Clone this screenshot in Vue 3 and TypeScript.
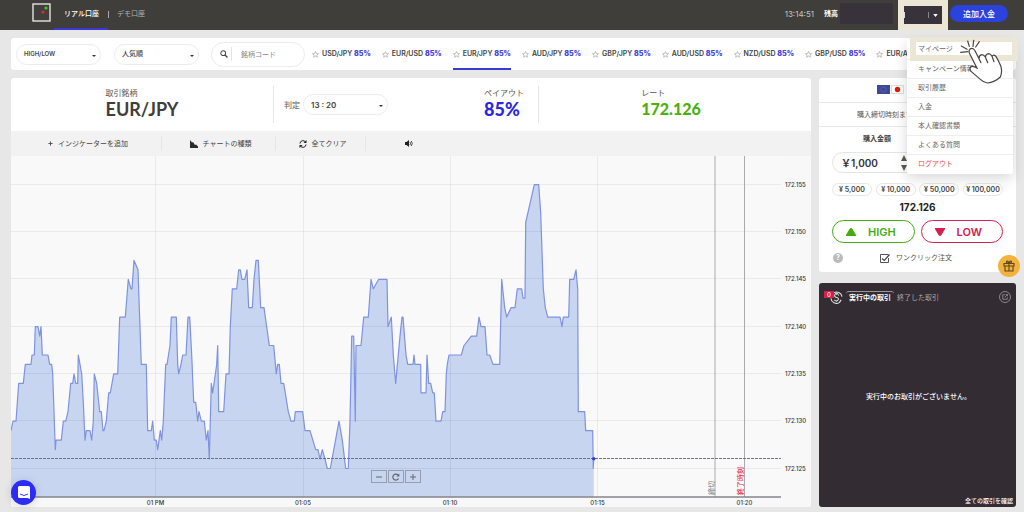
<script setup lang="ts">
import { ref } from 'vue'

interface Pair {
  name: string
  payout: string
}

const pairs: Pair[] = [
  'USD/JPY', 'EUR/USD', 'EUR/JPY', 'AUD/JPY', 'GBP/JPY', 'AUD/USD', 'NZD/USD', 'GBP/USD', 'EUR/AUD',
].map((name) => ({ name, payout: '85%' }))

const activePair = ref('EUR/JPY')
const menuItems: string[] = ['マイページ', 'キャンペーン情報', '取引履歴', '入金', '本人確認書類', 'よくある質問', 'ログアウト']
const chips: string[] = ['5,000', '10,000', '50,000', '100,000']
const amount = ref('￥1,000')
const oneClick = ref(true)
const search = ref('')

// Chart geometry: price in thousandths above 172, time in thirds of a unit.
const yOf = (level: number): number => 468.5 - (level - 125) * 9.46
const levels: number[] = [155, 150, 145, 140, 135, 130, 125]
const times = [
  { x: 155.5, label: '01 PM' },
  { x: 303, label: '01:05' },
  { x: 450, label: '01:10' },
  { x: 597.5, label: '01:15' },
  { x: 744.5, label: '01:20' },
]

const series: [number, number][] = [
  [33, 129], [39, 130], [48, 130], [56, 134], [70, 134], [76, 136], [93, 136], [96, 137], [103, 137], [106, 140],
  [114, 140], [119, 139], [123, 140], [127, 137], [144, 137], [149, 136], [155, 136], [158, 135], [166, 127],
  [168, 128], [184, 128], [190, 130], [197, 130], [204, 131], [212, 134], [218, 134], [222, 135], [227, 134],
  [233, 134], [235, 137], [245, 135], [250, 132], [255, 128], [259, 129], [270, 129], [275, 128], [280, 130],
  [283, 135], [290, 134], [299, 131], [304, 131], [309, 129], [312, 129], [319, 130], [326, 133], [331, 133],
  [341, 135], [353, 135], [359, 141], [376, 141], [385, 145], [393, 144], [396, 144], [402, 147], [414, 146],
  [418, 142], [424, 136], [439, 136], [443, 129], [454, 129], [458, 130], [463, 128], [469, 128], [473, 127],
  [481, 129], [485, 128], [490, 130], [497, 136], [501, 136], [510, 138], [514, 141], [529, 141], [533, 136],
  [536, 135], [543, 136], [548, 137], [558, 137], [564, 141], [569, 141], [575, 137], [581, 132], [587, 132],
  [593, 130], [597, 131], [604, 130], [613, 130], [619, 128], [624, 129], [628, 126], [634, 134], [638, 133],
  [650, 136], [653, 138], [656, 131], [671, 131], [678, 135], [687, 135], [691, 140], [697, 144], [710, 144],
  [716, 146], [721, 146], [726, 145], [734, 145], [741, 146], [746, 142], [757, 142], [762, 145], [768, 147],
  [775, 147], [782, 142], [792, 142], [808, 138], [821, 138], [829, 135], [833, 136], [838, 136], [843, 134],
  [851, 134], [865, 131], [873, 130], [883, 130], [886, 131], [908, 131], [915, 129], [930, 129], [947, 127],
  [954, 127], [960, 126], [967, 127], [975, 126], [982, 125], [991, 125], [1017, 130], [1027, 128], [1037, 125],
  [1045, 125], [1050, 130], [1055, 139], [1061, 139], [1066, 130], [1068, 138], [1083, 138], [1091, 141],
  [1105, 141], [1113, 145], [1120, 144], [1136, 145], [1161, 145], [1164, 140], [1174, 141], [1180, 137],
  [1187, 134], [1200, 139], [1206, 141], [1209, 141], [1218, 137], [1223, 136], [1239, 136], [1242, 137],
  [1245, 136], [1262, 136], [1263, 133], [1278, 133], [1281, 137], [1286, 134], [1292, 134], [1298, 133],
  [1303, 133], [1308, 130], [1323, 130], [1328, 131], [1335, 131], [1339, 135], [1342, 136], [1347, 137],
  [1384, 137], [1392, 138], [1414, 139], [1430, 139], [1437, 141], [1443, 140], [1455, 140], [1461, 137],
  [1469, 137], [1479, 136], [1499, 136], [1505, 145], [1514, 142], [1520, 141], [1533, 142], [1545, 142],
  [1552, 144], [1565, 144], [1569, 143], [1575, 143], [1577, 151], [1603, 155], [1616, 155], [1622, 152],
  [1630, 144], [1636, 142], [1643, 141], [1680, 141], [1686, 140], [1690, 141], [1706, 141], [1709, 145],
  [1721, 145], [1728, 146], [1733, 144], [1735, 131], [1754, 131], [1757, 129], [1778, 129], [1780, 125],
  [1781, 126],
]
const linePoints = series.map(([x, v]) => `${(x / 3).toFixed(1)},${yOf(v).toFixed(1)}`).join(' ')
const areaPoints = `11,497 ${linePoints} 593.7,497`
</script>

<template>
  <div class="page">
    <header class="top">
      <svg class="logo" viewBox="0 0 20 20" aria-hidden="true">
        <rect x="1" y="1" width="17" height="17" fill="#403f3c" stroke="#e4e4e2" stroke-width="1.4" />
        <circle cx="11" cy="9" r="1.6" fill="#e0264c" />
        <circle cx="14" cy="5" r="1.6" fill="#46c81e" />
      </svg>
      <nav class="accounts">
        <a class="account current" href="#real">リアル口座</a>
        <span class="bar"></span>
        <a class="account" href="#demo">デモ口座</a>
      </nav>
      <span class="clock">13:14:51</span>
      <span class="balance">残高</span>
      <span class="masked"></span>
      <div class="user-frame">
        <button class="user" aria-label="アカウントメニュー">
          <i class="sliver"></i><i class="sliver dim"></i>
          <svg viewBox="0 0 6 4" width="5" height="3"><path d="M0 0h6L3 4z" fill="#fff" /></svg>
        </button>
      </div>
      <button class="deposit">追加入金</button>

      <nav class="menu">
        <a v-for="(item, i) in menuItems" :key="item" href="#menu" :class="['menu-item', { first: i === 0, logout: i === 6 }]">{{ item }}</a>
        <span class="frame"></span>
        <svg class="hand" viewBox="780 116 129 138" aria-hidden="true">
          <path d="M828 197L808 158Q805 148 812 145Q820 142 825 151L837 174Q838 164 845 163Q852 163 856 170Q858 161 865 160Q872 160 876 168Q880 162 886 166Q890 169 902 196Q908 212 901 230Q884 246 862 248Q850 246 842 238L814 214Q807 206 812 200Q819 195 832 204Z" fill="#fff" />
          <path d="M831 204L808 158Q805 148 812 145Q820 142 825 151L843 187M837 174Q838 164 845 163Q852 163 856 170L863 187M856 170Q858 161 865 160Q872 160 876 168L882 184M876 168Q880 162 886 166Q890 169 902 196Q908 212 901 230Q884 246 862 248Q850 246 842 238L814 214Q807 206 812 200Q819 195 832 204M782 156L803 154M784 137L801 147M803 122L808 138M821 120L819 138M838 124L827 140" fill="none" stroke="#4b4542" stroke-width="3.6" stroke-linecap="round" stroke-linejoin="round" />
        </svg>
      </nav>
    </header>

    <section class="ticker">
      <label class="pick"><select aria-label="取引種類"><option>HIGH/LOW</option></select><i class="caret"></i></label>
      <label class="pick jp"><select aria-label="並び順"><option>人気順</option></select><i class="caret"></i></label>
      <label class="search">
        <svg viewBox="0 0 10 10" width="8" height="8"><circle cx="4" cy="4" r="3" fill="none" stroke="#444" stroke-width="1.3" /><path d="M6.3 6.3L9.3 9.3" stroke="#444" stroke-width="1.6" /></svg>
        <input v-model="search" type="text" placeholder="銘柄コード" />
      </label>
      <div class="pairs">
        <button v-for="p in pairs" :key="p.name" :class="['pair', { active: p.name === activePair }]" @click="activePair = p.name">
          <svg viewBox="0 0 14 14" width="7" height="7"><path d="M7 1l1.8 4 4.2.4-3.2 2.8 1 4.3L7 10.200l-3.800 2.300 1-4.300L1 5.400 5.200 5z" fill="none" stroke="#999" stroke-width="1.200" /></svg>
          <span>{{ p.name }} <b>{{ p.payout }}</b></span>
        </button>
      </div>
    </section>

    <main class="main">
      <section class="trade">
        <div class="summary">
          <div class="cell center"><div><p class="cap">取引銘柄</p><p class="big">EUR/JPY</p></div></div>
          <div class="cell mid">
            <label class="judge"><span>判定</span><span class="pick time"><select aria-label="判定時刻"><option>13 : 20</option></select><i class="caret"></i></span></label>
            <div><p class="cap">ペイアウト</p><p class="big payout">85%</p></div>
          </div>
          <div class="cell center"><div class="rate-box"><p class="cap">レート</p><p class="big rate">172.126</p></div></div>
        </div>
        <div class="tools">
          <button class="tool"><svg viewBox="0 0 6 6" width="5" height="5"><path d="M3 .5v5M.5 3h5" stroke="#555" stroke-width="1.200" /></svg>インジケーターを追加</button>
          <button class="tool"><svg viewBox="0 0 8 8" width="8" height="8"><path d="M0 0l2 2.500 1 -.5 2 3 1-.5 2 2V8H0z" fill="#2b2b2b" /></svg>チャートの種類</button>
          <button class="tool"><svg viewBox="0 0 16 16" width="8" height="8"><path d="M2 7a6 6 0 0 1 11-3M14 9a6 6 0 0 1-11 3" fill="none" stroke="#222" stroke-width="2" /><path d="M15 0v6H9zM1 16v-6h6z" fill="#222" /></svg>全てクリア</button>
          <button class="tool" aria-label="サウンド"><svg viewBox="0 0 16 14" width="8" height="7"><path d="M0 4h3l5-4v14l-5-4H0z" fill="#222" /><path d="M10 4q2 3 0 6M12.500 2q4 5 0 10" fill="none" stroke="#222" stroke-width="1.600" /></svg></button>
          <span></span>
        </div>
        <div class="chart">
          <svg viewBox="11 156 800 351" class="plot">
            <rect x="11" y="156" width="770" height="341" fill="#f9f9f9" />
            <polygon :points="areaPoints" fill="#c7d5f0" />
            <g stroke="#000" stroke-opacity="0.060" stroke-width="1">
              <path v-for="v in levels" :key="v" :d="`M11 ${Math.round(yOf(v)) - 0.5}H781`" />
              <path v-for="t in times.slice(0, 4)" :key="t.label" :d="`M${Math.floor(t.x) + 0.5} 156V497`" />
            </g>
            <polyline :points="linePoints" fill="none" stroke="#7f92e0" stroke-width="1.200" stroke-linejoin="round" />
            <path d="M715 156V497M744.500 156V497" stroke="#aaa" stroke-width="1" />
            <path d="M11 458.500H781" stroke="#6d7282" stroke-width="1" stroke-dasharray="3 1" />
            <path d="M11 497H781" stroke="#85858c" stroke-width="1.300" />
            <circle cx="593.700" cy="458.700" r="1.700" fill="#2a3fdc" />
            <text v-for="v in levels" :key="v" x="785" :y="Math.round(yOf(v)) + 2" class="axis">172.{{ v }}</text>
            <text v-for="t in times" :key="t.label" :x="t.x" y="505" text-anchor="middle" class="axis">{{ t.label }}</text>
            <text transform="translate(714 495) rotate(-90)" class="mark">締切</text>
            <text transform="translate(743 495) rotate(-90)" class="mark end">終了時刻</text>
          </svg>
          <div class="zoom">
            <button aria-label="縮小"><svg viewBox="0 0 8 8" width="8" height="8"><path d="M1 4h6" stroke="#666" /></svg></button>
            <button aria-label="リセット"><svg viewBox="0 0 8 8" width="8" height="8"><path d="M6.500 5.500A3 3 0 1 1 6 2" fill="none" stroke="#666" stroke-width="1.200" /><path d="M7.300 .5v3H4.300z" fill="#666" /></svg></button>
            <button aria-label="拡大"><svg viewBox="0 0 8 8" width="8" height="8"><path d="M1 4h6M4 1v6" stroke="#666" /></svg></button>
          </div>
        </div>
      </section>

      <aside class="side">
        <section class="order">
          <div class="flags">
            <svg viewBox="0 0 13 9" width="13" height="9"><rect width="13" height="9" fill="#3f479d" /><circle cx="6.500" cy="4.500" r="2.500" fill="none" stroke="#8c8b72" stroke-width=".7" stroke-dasharray=".7 .6" /></svg>
            <svg viewBox="0 0 13 9" width="13" height="9"><rect x=".5" y=".5" width="12" height="8" fill="#fff" stroke="#ddd" /><circle cx="6.500" cy="4.500" r="2.700" fill="#d81e05" /></svg>
          </div>
          <p class="deadline">購入締切時刻まで</p>
          <div class="form">
            <label class="amount-label" for="amount">購入金額</label>
            <div class="amount">
              <input id="amount" v-model="amount" type="text" />
              <svg viewBox="0 0 6 16" width="6" height="16"><path d="M0 6L3 0l3 6zM0 10h6L3 16z" fill="#5c5b4d" /></svg>
            </div>
            <div class="chips"><button v-for="c in chips" :key="c">¥ {{ c }}</button></div>
            <p class="price">172.126</p>
            <div class="sides">
              <button class="go high"><svg viewBox="0 0 10 8" width="10" height="8"><path d="M3.500 1Q5-1 6.500 1L10 7V8H0V7z" fill="#45ab12" /></svg><span>HIGH</span></button>
              <button class="go low"><svg viewBox="0 0 10 8" width="10" height="8"><path d="M0 0h10v1L6.500 7Q5 9 3.500 7L0 1z" fill="#d3204e" /></svg><span>LOW</span></button>
            </div>
            <div class="once">
              <button class="help" aria-label="ヘルプ">?</button>
              <label class="check">
                <input v-model="oneClick" type="checkbox" />
                <svg viewBox="0 0 10 9" width="10" height="9"><path d="M8.500 4v4.500h-8v-8h8" fill="none" stroke="#555" /><path d="M2 4.500l2.300 2L9.500 0.500" fill="none" stroke="#444" stroke-width="1.200" /></svg>
                <span>ワンクリック注文</span>
              </label>
            </div>
          </div>
        </section>

        <section class="history">
          <div class="hist-top">
            <span class="coin">
              <svg viewBox="0 0 14 14" width="13" height="13"><path d="M4 2a6 6 0 0 1 9 4M10 12.500A6 6 0 0 1 1 8M12 9.500l-2 3" fill="none" stroke="#ddd" stroke-width="1.200" /><path d="M9.300 5Q7-.3 5 4.500Q4.600 6.500 7 7Q9.600 7.500 9 9.300Q7 12 4.600 9.500M7 3v1M7 10.500v1" fill="none" stroke="#ddd" stroke-width="1.100" /></svg>
              <b>0</b>
            </span>
            <button class="tab on">実行中の取引</button>
            <button class="tab">終了した取引</button>
            <button class="open" aria-label="別ウィンドウで開く"><svg viewBox="0 0 8 8" width="6" height="6"><path d="M4 1H1v6h6V4.500M3.500 4.500L6.500 1.500M5 .7h2.300V3" fill="none" stroke="#aaa" stroke-width=".9" /></svg></button>
          </div>
          <p class="empty">実行中のお取引がございません。</p>
          <a class="all" href="#all">全ての取引を確認</a>
        </section>
      </aside>
    </main>

    <button class="gift" aria-label="プレゼント">
      <svg viewBox="0 0 12 12" width="12" height="12"><path d="M1 3.500h10v2.500H1zM2 6v5h8V6M6 3.500V11M6 3.500Q3 3 3.500 1.500Q5 0 6 3.500Q7 0 8.500 1.500Q9 3 6 3.500" fill="none" stroke="#5c481c" stroke-width="1.100" /></svg>
    </button>
    <button class="chat" aria-label="チャット">
      <svg viewBox="0 0 12 13" width="12" height="13"><path d="M1.500 0h9Q12 0 12 1.500V13L9.500 12h-8Q0 12 0 10.500v-9Q0 0 1.500 0z" fill="#fff" /><path d="M2 8q4 3 8 0" fill="none" stroke="#2b35f5" stroke-width="1" /></svg>
    </button>
  </div>
</template>

<style>
body {
  background: #e7e7e7;
}
</style>

<style scoped>
.page {
  position: relative;
  font-family: Inter, 'Noto Sans CJK JP', sans-serif;
  font-size: 7px;
  line-height: 10px;
  color: #555;
}
.page * {
  box-sizing: border-box;
}
p {
  margin: 0;
}
button,
input,
select {
  font: inherit;
  color: inherit;
  border: 0;
  padding: 0;
  margin: 0;
  background: none;
  outline: 0;
}
a {
  color: inherit;
  text-decoration: none;
}
svg {
  display: block;
  flex: none;
}

.top {
  position: relative;
  z-index: 5;
  display: flex;
  align-items: center;
  height: 30px;
  padding-right: 16px;
  background: #3f3e3b;
  color: #fff;
}
.logo {
  width: 20px;
  height: 20px;
  margin: 0 0 4px 32px;
}
.accounts {
  display: flex;
  align-items: center;
  align-self: stretch;
  margin-left: 2px;
  margin-right: auto;
}
.account {
  display: flex;
  align-items: center;
  height: 30px;
  padding: 0 8px 2px 8px;
  color: #b5b5b3;
}
.account.current {
  padding-left: 10px;
  padding-right: 9px;
  border-bottom: 2px solid #3b38d8;
  color: #fff;
  font-weight: 500;
  padding-bottom: 0;
}
.bar {
  width: 1px;
  height: 7px;
  margin-bottom: 2px;
  background: #aaa;
}
.clock {
  margin: 0 10px 2px 0;
  color: #c4c4c2;
  font-size: 8px;
}
.balance {
  margin: 0 2px 2px 0;
  font-weight: 600;
}
.masked {
  width: 53px;
  height: 21px;
  margin: 0 5px 3px 0;
  background: #38333a;
}
.user-frame {
  display: flex;
  align-items: center;
  justify-content: center;
  width: 50px;
  height: 30px;
  background: #ece6d6;
}
.user {
  display: flex;
  align-items: center;
  justify-content: space-between;
  width: 38px;
  height: 18px;
  padding-right: 4px;
  background: #38333a;
}
.sliver {
  width: 1px;
  height: 6px;
  background: #ddd;
}
.sliver.dim {
  margin-left: 18px;
  background: #888;
}
.deposit {
  width: 58px;
  height: 17px;
  margin: 0 0 3px 2px;
  border-radius: 9px;
  background: #2b42dc;
  color: #fff;
  font-size: 8px;
  font-weight: 500;
}

.menu {
  position: absolute;
  top: 40px;
  right: 11px;
  width: 106px;
  background: #fff;
  box-shadow: 0 4px 14px rgba(0, 0, 0, 0.16);
  border-radius: 2px;
  color: #666;
}
.menu-item {
  display: block;
  height: 19px;
  padding: 4px 11px;
  border-bottom: 1px solid #eee;
}
.menu-item.first {
  height: 20px;
}
.menu-item.logout {
  border-bottom: 0;
  color: #ea4b47;
}
.frame {
  position: absolute;
  left: 3px;
  top: -3px;
  width: 108px;
  height: 24px;
  border: solid #ece6d6;
  border-width: 5px 6px 6px;
}
.hand {
  position: absolute;
  left: 53px;
  top: -1px;
  width: 43px;
  height: 46px;
}

.ticker {
  display: flex;
  align-items: center;
  height: 32px;
  margin: 8px 8px 8px 11px;
  padding: 0 109px 0 5px;
  border-radius: 3px;
  background: #fff;
}
.pick {
  position: relative;
  flex: none;
  display: block;
  width: 85px;
  height: 21px;
  margin-right: 13px;
  border: 1px solid #ececec;
  border-radius: 11px;
}
.pick select {
  appearance: none;
  display: block;
  width: 100%;
  height: 19px;
  padding: 0 7px;
  font-size: 6px;
  font-weight: 600;
  color: #444;
}
.pick.jp {
  margin-right: 12px;
}
.pick.jp select {
  font-size: 7px;
  font-weight: 500;
}
.pick.time {
  margin: 0;
}
.pick.time select {
  font-size: 8px;
}
.caret {
  position: absolute;
  right: 4px;
  top: 10px;
  border: solid transparent;
  border-width: 2px 2px 0;
  border-top-color: #333;
}
.search {
  flex: none;
  display: flex;
  align-items: center;
  width: 94px;
  height: 25px;
  padding-left: 8px;
  border: 1px solid #ececec;
  border-radius: 13px;
}
.search input {
  width: 60px;
  height: 14px;
  margin-left: 3px;
  padding-left: 9px;
  border-left: 1px solid #e4e4e4;
}
.search input::placeholder {
  color: #888;
  opacity: 1;
}
.pairs {
  flex: 1;
  display: flex;
  align-self: stretch;
  gap: 11px;
  min-width: 0;
  margin-left: 7px;
  overflow: hidden;
  white-space: nowrap;
}
.pair {
  flex: none;
  display: flex;
  align-items: center;
  gap: 3px;
  border: solid transparent;
  border-width: 2px 0;
  font-weight: 600;
  color: #444;
}
.pair.active {
  border-bottom-color: #3b38d8;
}
.pair b {
  color: #4a48e0;
}

.main {
  display: grid;
  grid-template-columns: minmax(0, 1fr) 197px;
  gap: 8px;
  margin: 0 8px 5px 11px;
}
.trade {
  border-radius: 3px;
  overflow: hidden;
  background: #fff;
}
.summary {
  display: grid;
  grid-template-columns: 263fr 265fr 272fr;
  height: 53px;
  align-items: center;
}
.cell {
  display: flex;
  align-items: center;
  height: 37px;
  border-right: 1px solid #e6e6e6;
}
.cell:last-child {
  border: 0;
}
.center {
  justify-content: center;
}
.mid {
  justify-content: space-between;
  padding: 0 14px 0 10px;
}
.rate-box {
  padding-right: 8px;
}
.judge {
  display: flex;
  align-items: center;
  gap: 3px;
  font-size: 8px;
}
.cap {
  font-size: 8px;
  line-height: 12px;
}
.big {
  margin-bottom: 4px;
  font-family: Lato, sans-serif;
  font-size: 18px;
  line-height: 20px;
  font-weight: 700;
  color: #3f3e3b;
}
.big.payout {
  color: #2d27e0;
  font-weight: 900;
}
.big.rate {
  color: #4bb010;
  font-weight: 900;
  font-size: 16px;
}
.tools {
  display: grid;
  grid-template-columns: 151fr 114fr 90fr 86fr 359fr;
  align-items: center;
  height: 25px;
  background: #f2f2f2;
}
.tool {
  display: flex;
  align-items: center;
  justify-content: center;
  gap: 5px;
  height: 15px;
  padding-left: 4px;
  color: #444;
}
.tool:nth-child(-n + 3) {
  border-right: 1px solid #e6e6e6;
}
.tool:nth-child(4) {
  padding-left: 0;
}
.chart {
  position: relative;
  background: #f8f8f8;
}
.plot {
  width: 100%;
  height: auto;
}
.axis {
  font-size: 6px;
  font-weight: 500;
  fill: #333;
}
.mark {
  font-size: 7px;
  fill: #777;
}
.mark.end {
  fill: #ee3158;
  font-weight: 500;
}
.zoom {
  position: absolute;
  left: 45%;
  bottom: 24px;
  display: flex;
  gap: 1px;
}
.zoom button {
  display: grid;
  place-items: center;
  width: 16px;
  height: 13px;
  border: 1px solid #969eae;
}

.side {
  display: flex;
  flex-direction: column;
  gap: 11px;
}
.order {
  border-radius: 3px;
  background: #fff;
}
.flags {
  display: flex;
  gap: 1px;
  height: 25px;
  padding: 7px 0 0 58px;
  border-bottom: 1px solid #e8e8e8;
}
.deadline {
  height: 24px;
  padding: 7px 0 0 38px;
  border-bottom: 1px solid #e8e8e8;
}
.form {
  padding: 7px 13px 9px;
}
.amount-label {
  display: block;
  width: 90px;
  text-align: center;
  font-weight: 600;
  color: #444;
}
.amount {
  display: flex;
  align-items: center;
  width: 90px;
  height: 21px;
  margin-top: 8px;
  padding-left: 8px;
  border: 1px solid #e4e4e4;
  border-radius: 11px;
}
.amount input {
  width: 60px;
  font-size: 10px;
  line-height: 14px;
  font-weight: 600;
  color: #333;
}
.chips {
  display: flex;
  justify-content: space-between;
  margin-top: 10px;
}
.chips button {
  width: 40px;
  height: 13px;
  border: 1px solid #e6e6e6;
  border-radius: 7px;
  font-size: 7px;
  font-weight: 600;
  color: #444;
  white-space: nowrap;
}
.price {
  margin-top: 5px;
  text-align: center;
  font-size: 10px;
  line-height: 12px;
  font-weight: 700;
  color: #222;
}
.sides {
  display: grid;
  grid-template-columns: 1fr 1fr;
  gap: 6px;
  margin-top: 7px;
}
.go {
  display: flex;
  align-items: center;
  height: 23px;
  padding-left: 13px;
  border: 1px solid #45ab12;
  border-radius: 12px;
  color: #45ab12;
  font-size: 11px;
  font-weight: 600;
}
.go span {
  margin-left: 12px;
}
.go.low {
  border-color: #d3204e;
  color: #d3204e;
}
.once {
  display: flex;
  align-items: center;
  margin-top: 10px;
}
.help {
  width: 10px;
  height: 10px;
  margin-left: 1px;
  border-radius: 5px;
  background: #bbb;
  color: #fff;
  font-size: 7px;
  font-weight: 700;
}
.check {
  position: relative;
  display: flex;
  align-items: center;
  gap: 6px;
  margin-left: 37px;
}
.check input {
  position: absolute;
  opacity: 0;
  width: 10px;
  height: 9px;
}

.history {
  flex: 1;
  display: flex;
  flex-direction: column;
  padding: 7px 3px 1px 5px;
  border-radius: 3px;
  background: #342c33;
  color: #fff;
}
.hist-top {
  display: flex;
  align-items: center;
}
.coin {
  position: relative;
  padding: 1px 0 0 6px;
  margin-right: 3px;
}
.coin b {
  position: absolute;
  left: 0;
  top: 1px;
  width: 10px;
  height: 7px;
  background: #d3204e;
  font-size: 6px;
  line-height: 7px;
  font-weight: 500;
  text-align: center;
}
.tab {
  padding: 1px 3px;
  color: #aaa;
  border-top: 1px solid transparent;
}
.tab.on {
  color: #fff;
  font-weight: 600;
  border-color: #999;
  border-radius: 3px;
}
.open {
  display: grid;
  place-items: center;
  width: 12px;
  height: 12px;
  margin: 0 2px 0 auto;
  border: 1px solid #888;
  border-radius: 6px;
}
.empty {
  margin: auto 0;
  padding-bottom: 7px;
  text-align: center;
  font-weight: 500;
}
.all {
  align-self: flex-end;
  font-size: 6px;
  font-weight: 500;
}

.gift {
  position: absolute;
  right: 4px;
  top: 255px;
  display: grid;
  place-items: center;
  width: 22px;
  height: 22px;
  border-radius: 11px;
  background: #f2b23e;
}
.chat {
  position: absolute;
  left: 11px;
  bottom: 2px;
  display: grid;
  place-items: center;
  width: 25px;
  height: 25px;
  border-radius: 13px;
  background: #2b2df5;
  box-shadow: 0 1px 10px rgba(0, 0, 0, 0.14);
}
</style>
